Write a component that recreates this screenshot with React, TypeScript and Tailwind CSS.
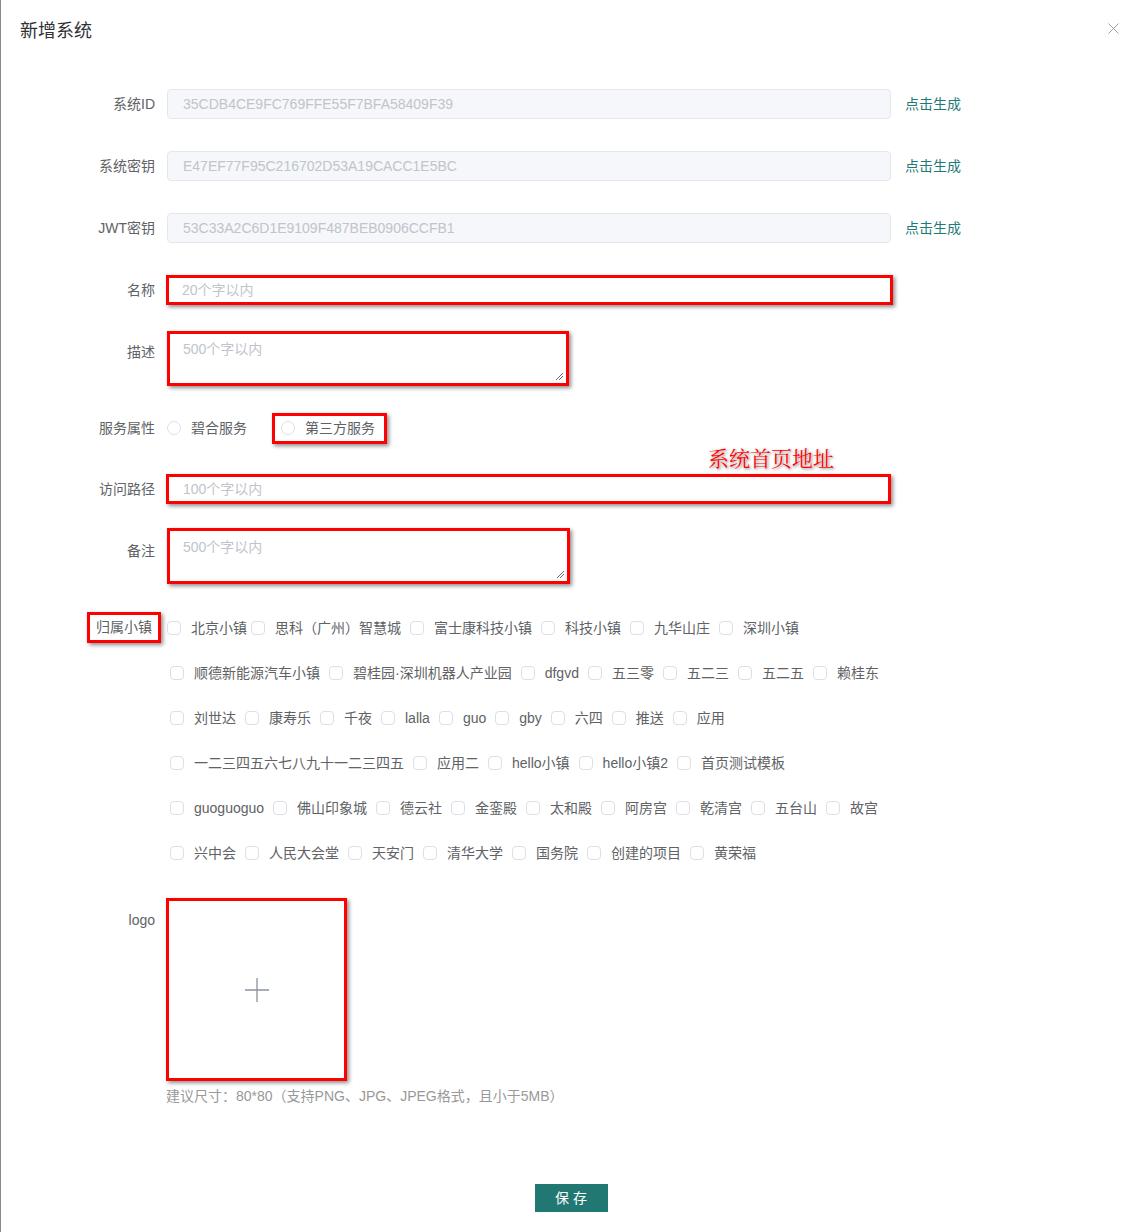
import { X } from 'lucide-react';

const towns: string[][] = [
  ['北京小镇', '思科（广州）智慧城', '富士康科技小镇', '科技小镇', '九华山庄', '深圳小镇'],
  ['顺德新能源汽车小镇', '碧桂园·深圳机器人产业园', 'dfgvd', '五三零', '五二三', '五二五', '赖桂东'],
  ['刘世达', '康寿乐', '千夜', 'lalla', 'guo', 'gby', '六四', '推送', '应用'],
  ['一二三四五六七八九十一二三四五', '应用二', 'hello小镇', 'hello小镇2', '首页测试模板'],
  ['guoguoguo', '佛山印象城', '德云社', '金銮殿', '太和殿', '阿房宫', '乾清宫', '五台山', '故宫'],
  ['兴中会', '人民大会堂', '天安门', '清华大学', '国务院', '创建的项目', '黄荣福'],
];

const font = { fontFamily: '"Liberation Sans", "Noto Sans CJK SC", sans-serif' };

function Label({ children }: { children: React.ReactNode }) {
  return (
    <div className="w-[154px] shrink-0 text-right text-sm text-[#606266] leading-[30px]">{children}</div>
  );
}

function KeyRow({ label, value, top }: { label: string; value: string; top: string }) {
  return (
    <div className={`flex items-start ${top}`}>
      <Label>{label}</Label>
      <div className="ml-[12px] w-[724px] h-[30px] rounded bg-[#f5f7fa] border border-[#e4e7ed] px-[15px] text-sm leading-[28px] text-[#c0c4cc]">
        {value}
      </div>
      <a className="ml-[14px] text-sm leading-[30px] text-[#1d7a76]">点击生成</a>
    </div>
  );
}

function ResizeGrip() {
  return (
    <svg className="absolute right-[3px] bottom-[3px]" width="8" height="8" viewBox="0 0 8 8">
      <path d="M1 8 L8 1 M4 8 L8 4" stroke="#6b6b6b" strokeWidth="1" />
    </svg>
  );
}

const redBox = 'border-[3px] border-[#ff0000] shadow-[2px_2px_4px_rgba(0,0,0,0.45)]';

function Check({ text, tight }: { text: string; tight?: boolean }) {
  return (
    <div className={`flex items-center ${tight ? 'mr-[4px]' : 'mr-[9px]'}`}>
      <span className="w-[14px] h-[14px] rounded-sm border border-[#dcdfe6] bg-white" />
      <span className="ml-[10px] text-sm text-[#606266] leading-[20px] whitespace-nowrap">{text}</span>
    </div>
  );
}

export default function App() {
  return (
    <div style={font} className="relative w-[1139px] h-[1232px] bg-white border-l border-[#8a8a8a] overflow-hidden">
      <div className="absolute left-[-1px] top-[133px] w-[1px] h-[35px] bg-[#1d5f5b]" />

      {/* header */}
      <div className="flex items-center justify-between h-[62px] pl-[19px] pr-[16px]">
        <h1 className="text-lg text-[#303133]">新增系统</h1>
        <X size={19} strokeWidth={1.1} className="text-[#909399] -mt-[6px]" />
      </div>

      {/* form */}
      <div className="flex flex-col">
        <KeyRow top="mt-[27px]" label="系统ID" value="35CDB4CE9FC769FFE55F7BFA58409F39" />
        <KeyRow top="mt-[32px]" label="系统密钥" value="E47EF77F95C216702D53A19CACC1E5BC" />
        <KeyRow top="mt-[32px]" label="JWT密钥" value="53C33A2C6D1E9109F487BEB0906CCFB1" />

        <div className="flex items-start mt-[32px]">
          <Label>名称</Label>
          <div className={`ml-[11px] w-[727px] h-[30px] bg-white px-[13px] text-sm leading-[24px] text-[#c0c4cc] ${redBox}`}>
            20个字以内
          </div>
        </div>

        <div className="flex items-start mt-[26px]">
          <div className="w-[154px] shrink-0 text-right text-sm text-[#606266] leading-[30px] mt-[6px]">描述</div>
          <div className={`relative ml-[12px] w-[402px] h-[55px] bg-white px-[13px] pt-[5px] text-sm leading-[20px] text-[#c0c4cc] ${redBox}`}>
            500个字以内
            <ResizeGrip />
          </div>
        </div>

        <div className="flex items-center mt-[27px] h-[30px]">
          <Label>服务属性</Label>
          <div className="ml-[12px] flex items-center">
            <span className="w-[14px] h-[14px] rounded-full border border-[#dcdfe6]" />
            <span className="ml-[10px] text-sm text-[#606266]">碧合服务</span>
          </div>
          <div className={`ml-[25px] flex items-center h-[31px] pl-[6px] pr-[9px] ${redBox}`}>
            <span className="w-[14px] h-[14px] rounded-full border border-[#dcdfe6]" />
            <span className="ml-[10px] text-sm text-[#606266]">第三方服务</span>
          </div>
        </div>

        <div className="flex items-start mt-[31px]">
          <Label>访问路径</Label>
          <div className={`ml-[11px] w-[725px] h-[30px] bg-white px-[14px] text-sm leading-[24px] text-[#c0c4cc] ${redBox}`}>
            100个字以内
          </div>
        </div>

        <div className="flex items-start mt-[24px]">
          <div className="w-[154px] shrink-0 text-right text-sm text-[#606266] leading-[30px] mt-[8px]">备注</div>
          <div className={`relative ml-[12px] w-[403px] h-[56px] bg-white px-[13px] pt-[6px] text-sm leading-[20px] text-[#c0c4cc] ${redBox}`}>
            500个字以内
            <ResizeGrip />
          </div>
        </div>

        <div className="flex items-start mt-[28px]">
          <div className="w-[154px] shrink-0 flex justify-end">
            <div className={`-mr-[6px] h-[31px] px-[6px] text-sm leading-[25px] text-[#606266] ${redBox}`}>归属小镇</div>
          </div>
          <div className="ml-[12px] flex flex-col">
            {towns.map((row, i) => (
              <div key={i} className={`flex items-center h-[31px] ${i === 0 ? '' : 'pl-[3px] mt-[14px]'}`}>
                {row.map((t, j) => (
                  <Check key={t} text={t} tight={i === 0 && j === 0} />
                ))}
              </div>
            ))}
          </div>
        </div>

        <div className="flex items-start mt-[30px]">
          <div className="w-[154px] shrink-0 text-right text-sm text-[#606266] leading-[30px] mt-[7px]">logo</div>
          <div className="ml-[11px] flex flex-col">
            <div className={`w-[181px] h-[183px] flex items-center justify-center bg-white ${redBox}`}>
              <svg width="26" height="26" viewBox="0 0 26 26">
                <path d="M13 1 V25 M1 13 H25" stroke="#8c939d" strokeWidth="1.3" />
              </svg>
            </div>
            <p className="mt-[5px] text-sm leading-[20px] text-[#999999]">建议尺寸：80*80（支持PNG、JPG、JPEG格式，且小于5MB）</p>
          </div>
        </div>

        <div className="flex justify-center mt-[78px] pl-[2px]">
          <button className="w-[73px] h-[28px] bg-[#217873] text-white text-sm tracking-[4px] pl-[4px]">保存</button>
        </div>
      </div>

      {/* annotation */}
      <div
        className="absolute left-[707px] top-[443px] text-[21px] leading-[28px] text-[#ff0000] [text-shadow:0_0_2px_#fff,1px_1px_3px_rgba(0,0,0,0.6)]"
        style={{ fontFamily: '"Noto Serif CJK SC", "Noto Sans CJK SC", serif' }}
      >
        系统首页地址
      </div>
    </div>
  );
}
